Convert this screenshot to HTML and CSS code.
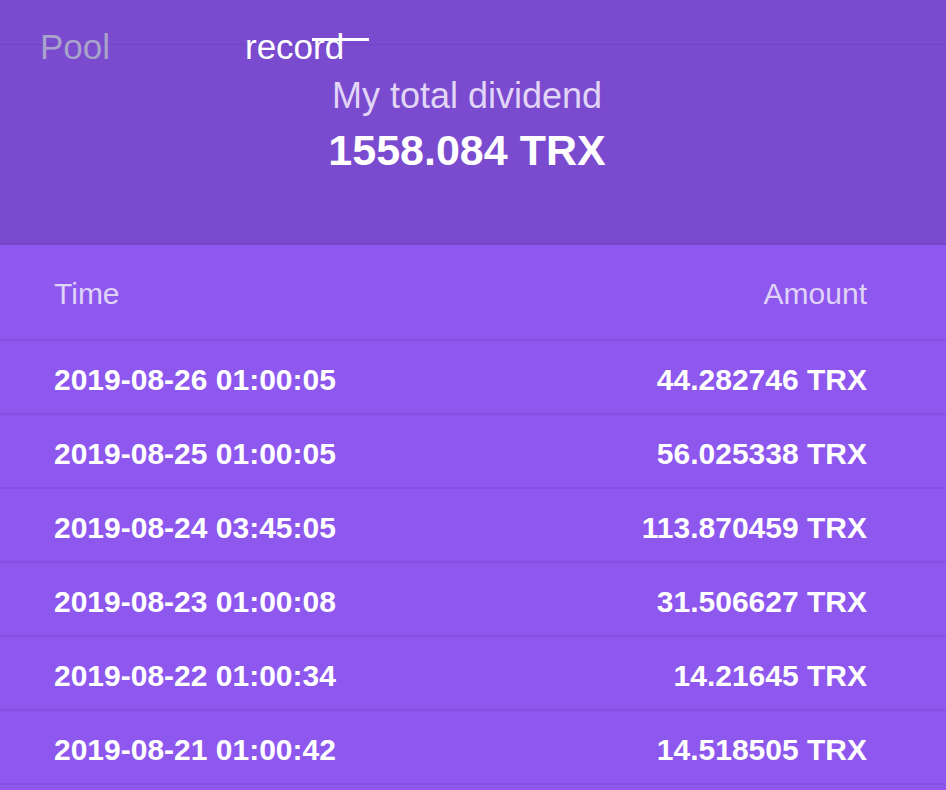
FILE: index.html
```html
<!DOCTYPE html>
<html lang="en">
<head>
<meta charset="UTF-8">
<meta name="viewport" content="width=device-width,initial-scale=1.0">
<title>Dividend record</title>
<link rel="stylesheet" href="styles.css">
</head>
<body>
<div class="top">
<div class="tabs">
<span class="tab">Pool</span>
<span class="tab active">record</span>
</div>
<div class="summary">
<p class="label">My total dividend</p>
<p class="total">1558.084 TRX</p>
</div>
</div>
<div class="list">
<div class="row head"><span>Time</span><span>Amount</span></div>
<div class="row"><span>2019-08-26 01:00:05</span><span>44.282746 TRX</span></div>
<div class="row"><span>2019-08-25 01:00:05</span><span>56.025338 TRX</span></div>
<div class="row"><span>2019-08-24 03:45:05</span><span>113.870459 TRX</span></div>
<div class="row"><span>2019-08-23 01:00:08</span><span>31.506627 TRX</span></div>
<div class="row"><span>2019-08-22 01:00:34</span><span>14.21645 TRX</span></div>
<div class="row"><span>2019-08-21 01:00:42</span><span>14.518505 TRX</span></div>
</div>
</body>
</html>
```
FILE: styles.css
```css
body{
margin:0;
font-family:"Liberation Sans",Arial,sans-serif;
background-color:#8e58ef;
height:100vh;
overflow:hidden;
}
.top{
background-color:#7a4acf;
height:243px;
border-bottom:2px solid #7545c8;
position:relative;
}
.tabs{
display:flex;
padding:29px 0 0 40px;
font-size:35px;
line-height:35px;
}
.tabs::before{
content:"";
position:absolute;
left:0;
right:0;
top:44px;
height:1px;
background-color:#7244c4;
}
.tab{
width:205px;
color:#a8a3cb;
position:relative;
}
.tab.active{
color:#ffffff;
}
.tab.active::after{
content:"";
position:absolute;
left:67px;
top:9px;
width:57px;
height:3px;
background-color:#ffffff;
}
.summary{
text-align:center;
padding-right:12px;
}
.label{
margin:14px 0 0;
font-size:36px;
line-height:36px;
color:#e2d6f7;
}
.total{
margin:15px 0 0;
font-size:43px;
line-height:43px;
font-weight:bold;
color:#ffffff;
}
.row{
display:flex;
justify-content:space-between;
padding:6px 79px 0 54px;
height:66px;
line-height:66px;
font-size:30px;
font-weight:bold;
color:#ffffff;
border-bottom:2px solid #8650e3;
}
.row.head{
padding-top:3px;
height:91px;
line-height:91px;
font-weight:normal;
color:#e0d3f8;
}
```
